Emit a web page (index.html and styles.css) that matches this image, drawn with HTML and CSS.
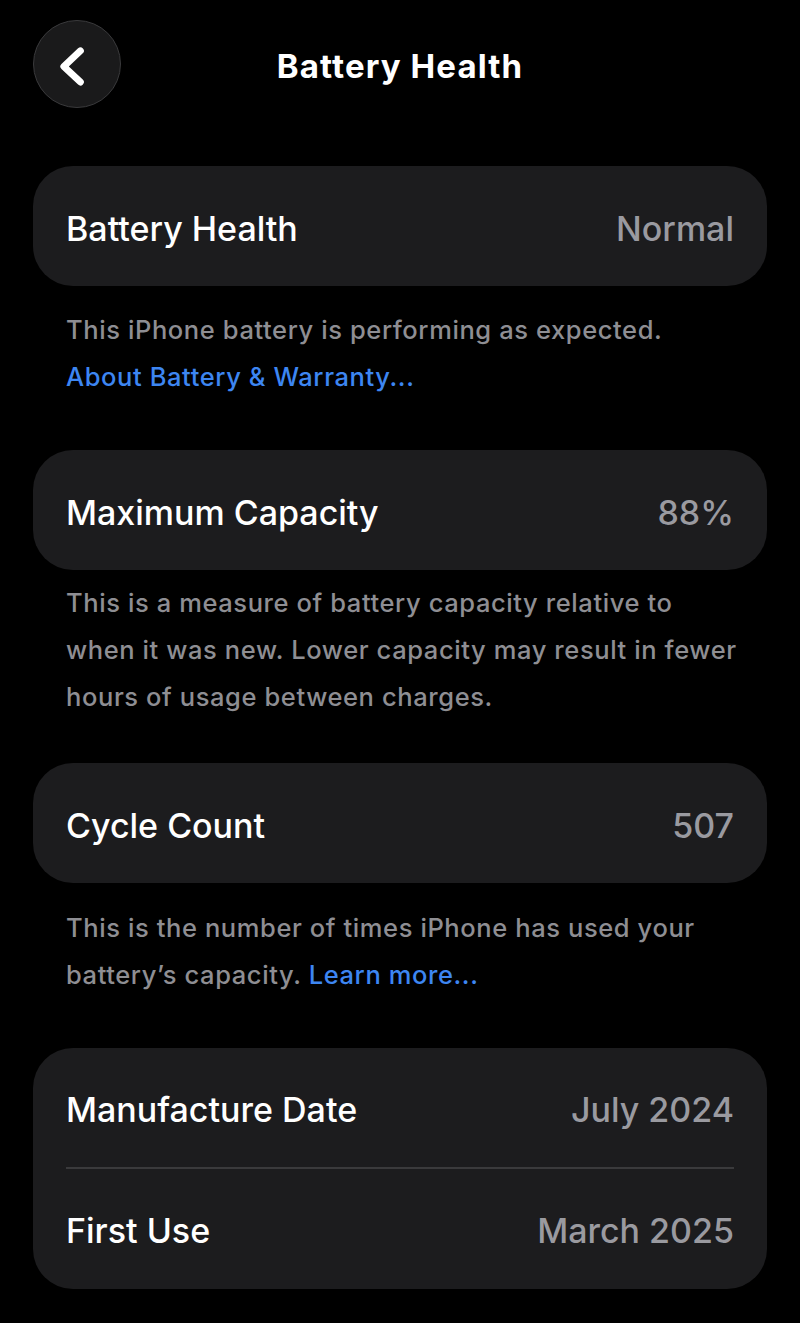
FILE: index.html
```html
<!DOCTYPE html>
<html lang="en">
<head>
<meta charset="utf-8">
<title>Battery Health</title>
<link rel="stylesheet" href="styles.css">
</head>
<body>
<div class="screen">
  <header class="nav">
    <button class="back" aria-label="Back">
      <svg width="88" height="88" viewBox="0 0 88 88">
        <path d="M47.5 30.5 L30.5 46.5 L47.5 62.5" fill="none" stroke="#ffffff" stroke-width="7" stroke-linecap="round" stroke-linejoin="round"/>
      </svg>
    </button>
    <h1 class="title">Battery Health</h1>
    <div class="spacer"></div>
  </header>

  <section class="card c1">
    <div class="row"><span class="label">Battery Health</span><span class="value">Normal</span></div>
  </section>
  <p class="footer f1">This iPhone battery is performing as expected.<br><a class="link">About Battery &amp; Warranty...</a></p>

  <section class="card c2">
    <div class="row"><span class="label">Maximum Capacity</span><span class="value">88%</span></div>
  </section>
  <p class="footer f2">This is a measure of battery capacity relative to<br>when it was new. Lower capacity may result in fewer<br>hours of usage between charges.</p>

  <section class="card c3">
    <div class="row"><span class="label">Cycle Count</span><span class="value">507</span></div>
  </section>
  <p class="footer f3">This is the number of times iPhone has used your<br>battery’s capacity. <a class="link">Learn more...</a></p>

  <section class="card c4">
    <div class="row r1"><span class="label">Manufacture Date</span><span class="value">July 2024</span></div>
    <div class="sep"></div>
    <div class="row r2"><span class="label">First Use</span><span class="value">March 2025</span></div>
  </section>
</div>
</body>
</html>
```
FILE: styles.css
```css
* { box-sizing: border-box; }
html, body {
  margin: 0;
  padding: 0;
  background: #000;
}
body {
  font-family: Inter, "Noto Sans", "Liberation Sans", sans-serif;
  color: #fff;
  width: 800px;
  height: 1323px;
  overflow: hidden;
}
.screen {
  padding: 20px 33px 0;
}
.nav {
  display: grid;
  grid-template-columns: 88px 1fr 88px;
  align-items: center;
  height: 88px;
}
.back {
  width: 88px;
  height: 88px;
  padding: 0;
  border-radius: 50%;
  border: 1.5px solid #3a3a3c;
  background: #1a1a1b;
  display: flex;
  align-items: center;
  justify-content: center;
}
.back svg { display: block; }
.title {
  margin: 0;
  text-align: center;
  font-size: 33px;
  font-weight: 700;
  letter-spacing: 1.1px;
  color: #fff;
  padding-top: 4px;
}
.card {
  background: #1c1c1e;
  border-radius: 40px;
  padding: 0 33px;
}
.c1 { margin-top: 58px; }
.row {
  height: 120px;
  display: flex;
  align-items: center;
  justify-content: space-between;
  padding-top: 4px;
}
.r1 { height: 119px; }
.r2 { height: 120px; }
.label {
  font-size: 34px;
  font-weight: 500;
  color: #fff;
}
.value {
  font-size: 34px;
  font-weight: 500;
  color: #9a9aa0;
}
.sep {
  height: 1.5px;
  background: #3a3a3c;
}
.footer {
  margin: 0;
  padding: 0 33px;
  font-size: 25.5px;
  line-height: 47px;
  font-weight: 500;
  letter-spacing: 0.6px;
  color: #8e8e93;
  white-space: nowrap;
}
.f1 { margin-top: 20px; margin-bottom: 50px; }
.f2 { margin-top: 9px; margin-bottom: 43px; }
.f3 { margin-top: 21px; margin-bottom: 50px; }
.link {
  color: #3d86f2;
  text-decoration: none;
}
```
